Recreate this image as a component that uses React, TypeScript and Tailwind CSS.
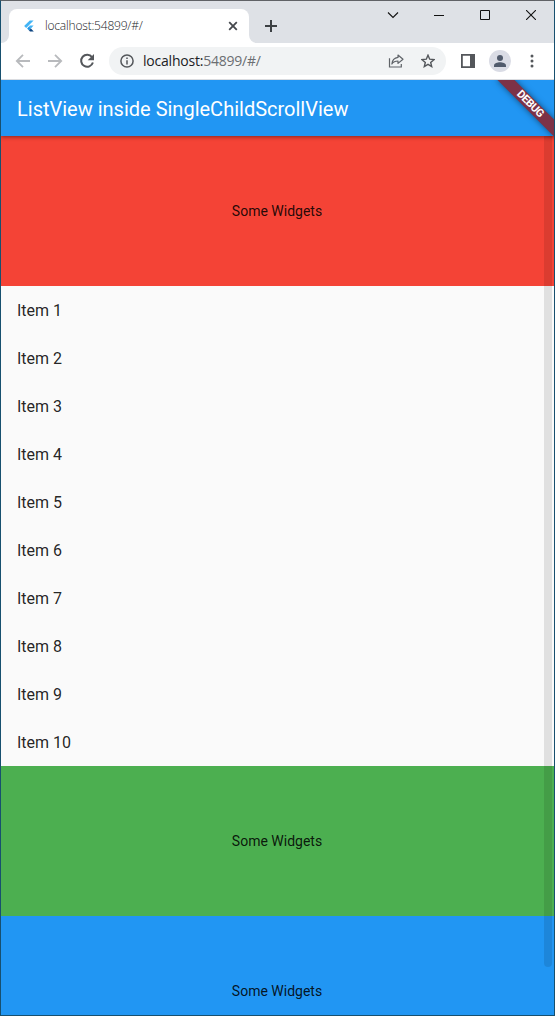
import React from "react";

const items = Array.from({ length: 10 }, (_, i) => `Item ${i + 1}`);

function FlutterMark() {
  return (
    <svg width="12" height="12" viewBox="0 0 12 12" className="shrink-0">
      <path d="M6.8 0.5h3.8L3.2 7.9 1.1 6z" fill="#42b4f5" />
      <path d="M6.8 5.6h3.8L7.9 8.5 6 6.6z" fill="#42b4f5" />
      <path d="M4.1 8.5 6 6.6l1.9 1.9L6 10.4z" fill="#2196e8" />
      <path d="M6 10.4l1.9-1.9 2.9 2.9H7z" fill="#0b4380" />
    </svg>
  );
}

function TabStrip() {
  return (
    <div className="flex h-[42px] shrink-0 bg-[#dee1e6]">
      <div className="flex w-2 items-end bg-white">
        <div className="h-full w-full rounded-br-lg bg-[#dee1e6]" />
      </div>
      <div className="flex w-60 bg-[#dee1e6] pt-2">
        <div className="flex h-[34px] w-full items-center rounded-t-lg bg-white pl-[14px] pr-[11px]">
          <FlutterMark />
          <span className="ml-[10px] w-[170px] whitespace-nowrap font-['Open_Sans','Noto_Sans',sans-serif] text-[12px] font-light leading-4 tracking-[-0.2px] text-[#202226]">
            localhost:54899/#/
          </span>
          <svg width="10" height="10" viewBox="0 0 10 10" className="ml-auto" stroke="#45484d" strokeWidth="1.8">
            <path d="M1.2 1.2l7.6 7.6M8.8 1.2L1.2 8.8" />
          </svg>
        </div>
      </div>
      <div className="w-2 bg-white">
        <div className="h-full w-full rounded-bl-lg bg-[#dee1e6]" />
      </div>
      <div className="flex flex-1 items-start">
        <svg width="12" height="12" viewBox="0 0 12 12" className="ml-[8px] mt-[19px]" stroke="#3c4043" strokeWidth="2">
          <path d="M6 0v12M0 6h12" />
        </svg>
        <div className="ml-auto flex h-7 text-[#111]">
          <div className="flex w-[46px] items-center justify-center">
            <svg width="12" height="12" viewBox="0 0 12 12" fill="none" stroke="currentColor" strokeWidth="1.1">
              <path d="M1 3.5l5 5 5-5" />
            </svg>
          </div>
          <div className="flex w-[46px] items-center justify-center">
            <svg width="10" height="10" viewBox="0 0 10 10" fill="none" stroke="currentColor" strokeWidth="1">
              <path d="M0 5.5h10" />
            </svg>
          </div>
          <div className="flex w-[46px] items-center justify-center">
            <svg width="10" height="10" viewBox="0 0 10 10" fill="none" stroke="currentColor" strokeWidth="1">
              <path d="M.5.5h9v9h-9z" />
            </svg>
          </div>
          <div className="flex w-[46px] items-center justify-center">
            <svg width="10" height="10" viewBox="0 0 10 10" fill="none" stroke="currentColor" strokeWidth="1.1">
              <path d="M0 0l10 10M10 0L0 10" />
            </svg>
          </div>
        </div>
      </div>
    </div>
  );
}

function Toolbar() {
  return (
    <div className="flex h-[37px] shrink-0 items-center border-b border-[#dadce0] bg-white">
      <svg width="16" height="16" viewBox="0 0 16 16" className="ml-[14px]" fill="none" stroke="#b8babd" strokeWidth="1.8">
        <path d="M15 8H2.5M8 1.8L1.8 8 8 14.2" />
      </svg>
      <svg width="16" height="16" viewBox="0 0 16 16" className="ml-4" fill="none" stroke="#b8babd" strokeWidth="1.8">
        <path d="M1 8h12.5M8 1.8L14.2 8 8 14.2" />
      </svg>
      <svg width="16" height="16" viewBox="0 0 16 16" className="ml-4" fill="none">
        <path d="M13 4.2A6 6 0 1 0 13.9 9.5" stroke="#54575b" strokeWidth="2" />
        <path d="M15 1v6.3H8.7z" fill="#54575b" />
      </svg>
      <div className="ml-[14px] flex h-7 w-[337px] items-center rounded-full bg-[#f1f3f4] pl-[11px] pr-[11px]">
        <svg width="14" height="14" viewBox="0 0 14 14" fill="none" stroke="#54575b" strokeWidth="1.5">
          <circle cx="7" cy="7" r="6.1" />
          <path d="M7 6.3v4.2M7 3.6v1.5" />
        </svg>
        <span className="ml-[9px] whitespace-nowrap font-['Open_Sans','Noto_Sans',sans-serif] text-[14px] leading-5 tracking-[-0.22px] text-[#6b6e72]">
          <span className="text-[#202124]">localhost:</span>54899/#/
        </span>
        <svg width="16" height="16" viewBox="0 0 16 16" className="ml-auto -translate-x-px" fill="none" stroke="#5f6368" strokeWidth="1.2">
          <path d="M1.5 5.2v8.8h11.8v-3" />
          <path d="M10 2l5 4.2-5 4.2V8C7.2 8 5.3 8.8 3.9 11c.3-3.6 2.2-6.1 6.1-6.6z" strokeLinejoin="round" />
        </svg>
        <svg width="14" height="14" viewBox="0 0 14 14" className="ml-4" fill="none" stroke="#54575b" strokeWidth="1.4">
          <path d="M7 1.2l1.7 4 4.3.4-3.3 2.8 1 4.2L7 10.4l-3.7 2.2 1-4.2L1 5.6l4.3-.4z" />
        </svg>
      </div>
      <svg width="14" height="14" viewBox="0 0 14 14" className="ml-[15px]">
        <path d="M.9.9h12.2v12.2H.9z" fill="white" stroke="#54575b" strokeWidth="1.8" />
        <path d="M9 0h5v14H9z" fill="#54575b" />
      </svg>
      <svg width="22" height="22" viewBox="0 0 22 22" className="ml-[14px]">
        <circle cx="11" cy="11" r="11" fill="#dadce5" />
        <circle cx="11" cy="8" r="3" fill="#515b6c" />
        <path d="M5 17v-1.5c0-2 3.5-3.2 6-3.2s6 1.2 6 3.2V17z" fill="#515b6c" />
      </svg>
      <svg width="4" height="14" viewBox="0 0 4 14" className="ml-[19px]" fill="#54575b">
        <circle cx="2" cy="2" r="1.5" />
        <circle cx="2" cy="7" r="1.5" />
        <circle cx="2" cy="12" r="1.5" />
      </svg>
    </div>
  );
}

function Panel({ className }: { className: string }) {
  return (
    <div className={`flex h-[150px] shrink-0 items-center justify-center pr-px text-[14px] leading-4 text-black/87 ${className}`}>
      Some Widgets
    </div>
  );
}

export default function App() {
  return (
    <div className="flex h-[1016px] w-[555px] flex-col overflow-hidden border border-[#17506f] border-t-[#606266] bg-white font-[Roboto,sans-serif]">
      <TabStrip />
      <Toolbar />
      <div className="relative flex min-h-0 flex-1 flex-col overflow-hidden bg-[#fafafa]">
        <header className="relative z-10 flex h-14 shrink-0 items-center bg-[#2196f3] px-4 pt-0.5 text-[20px] font-normal leading-6 text-white shadow-[0_1px_4px_rgba(0,0,0,0.45)]">
          ListView inside SingleChildScrollView
        </header>
        <main className="flex min-h-0 flex-1 flex-col overflow-hidden">
          <Panel className="bg-[#f44336]" />
          <ul className="shrink-0">
            {items.map((item) => (
              <li key={item} className="flex h-12 items-center px-4 pt-0.5 text-[16px] leading-5 text-black/87">
                {item}
              </li>
            ))}
          </ul>
          <Panel className="bg-[#4caf50]" />
          <Panel className="bg-[#2196f3]" />
        </main>
        <div className="absolute right-[2px] top-14 h-[831px] w-2 rounded-b-full bg-black/10" />
        <div className="absolute right-[-16px] top-[18px] z-20 flex h-3 w-20 rotate-45 items-center justify-center bg-[#7d3247] text-[11px] font-bold leading-3 tracking-[-0.5px] text-white shadow-[0_0_6px_rgba(0,0,0,0.5)]">
          DEBUG
        </div>
      </div>
    </div>
  );
}
